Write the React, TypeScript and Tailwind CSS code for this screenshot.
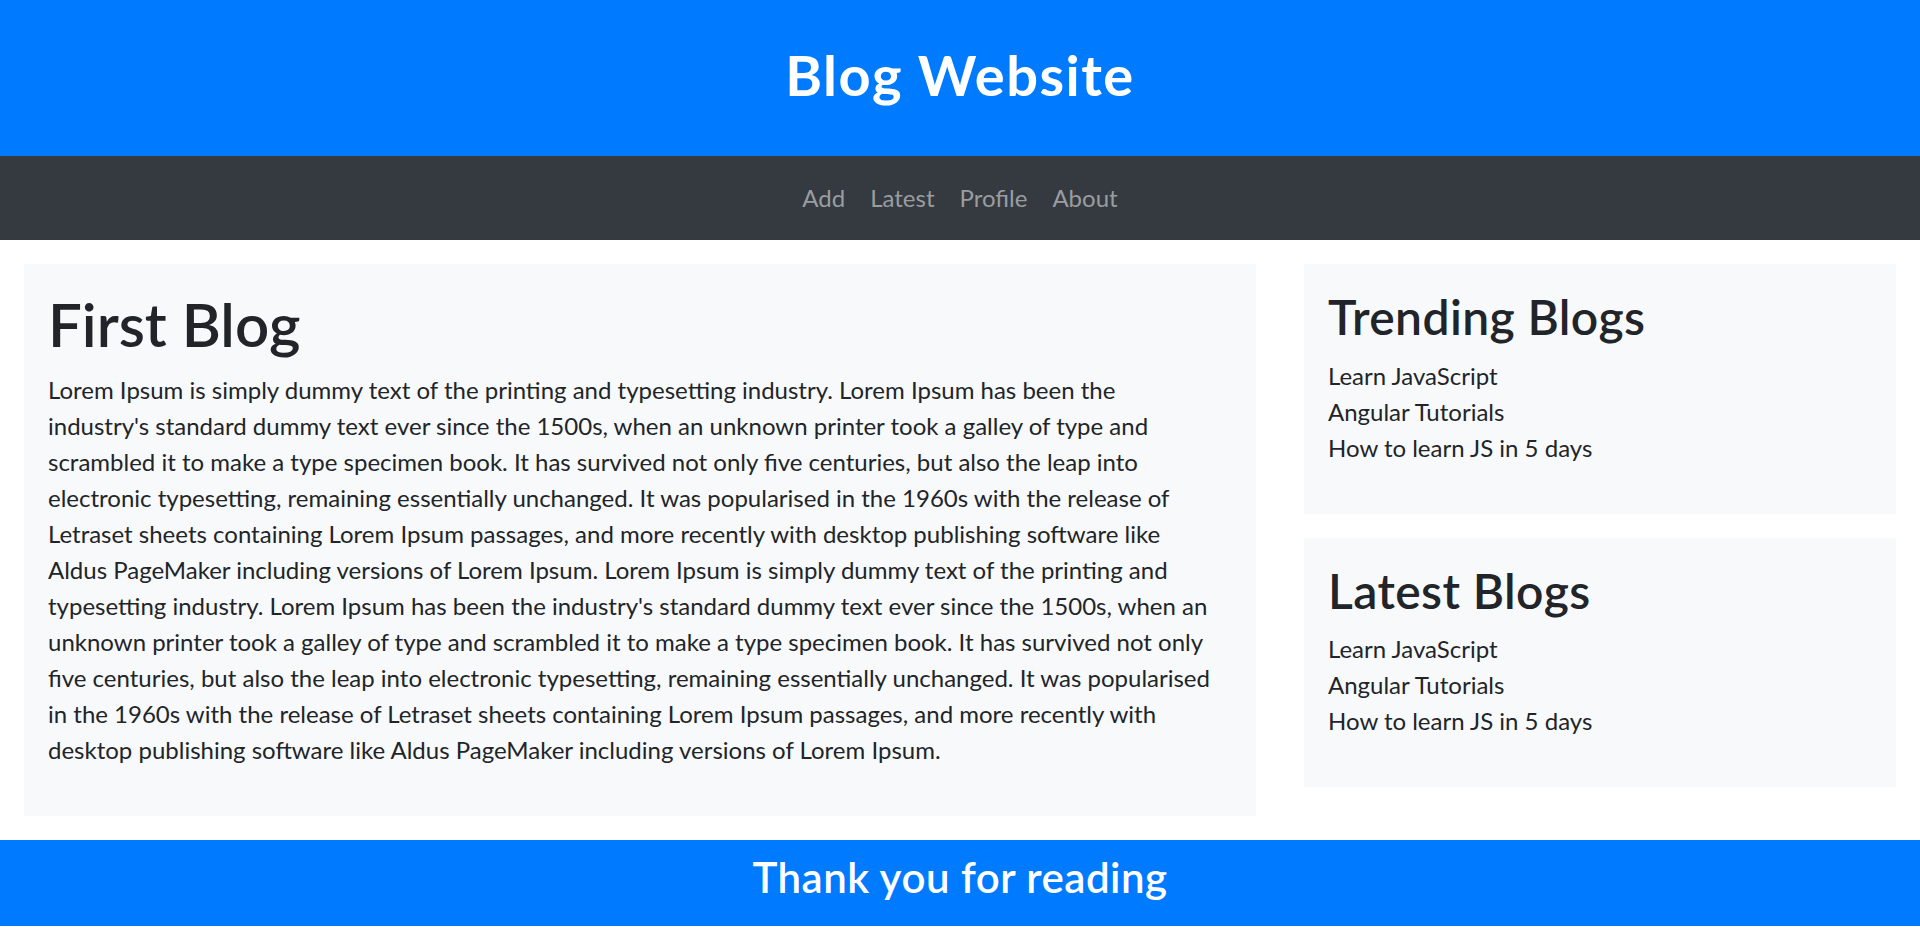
import React from "react";

const lines = [
  "Lorem Ipsum is simply dummy text of the printing and typesetting industry. Lorem Ipsum has been the",
  "industry's standard dummy text ever since the 1500s, when an unknown printer took a galley of type and",
  "scrambled it to make a type specimen book. It has survived not only five centuries, but also the leap into",
  "electronic typesetting, remaining essentially unchanged. It was popularised in the 1960s with the release of",
  "Letraset sheets containing Lorem Ipsum passages, and more recently with desktop publishing software like",
  "Aldus PageMaker including versions of Lorem Ipsum. Lorem Ipsum is simply dummy text of the printing and",
  "typesetting industry. Lorem Ipsum has been the industry's standard dummy text ever since the 1500s, when an",
  "unknown printer took a galley of type and scrambled it to make a type specimen book. It has survived not only",
  "five centuries, but also the leap into electronic typesetting, remaining essentially unchanged. It was popularised",
  "in the 1960s with the release of Letraset sheets containing Lorem Ipsum passages, and more recently with",
  "desktop publishing software like Aldus PageMaker including versions of Lorem Ipsum.",
];

const items = ["Learn JavaScript", "Angular Tutorials", "How to learn JS in 5 days"];

function SideCard({ title }: { title: string }) {
  return (
    <div className="bg-[#f8f9fa] p-[24px]">
      <h2 className="text-[48px] leading-[1.2] font-semibold tracking-[0.4px] mb-[12px] text-[#212529]">{title}</h2>
      <ul className="mb-[24px]">
        {items.map((t) => (
          <li key={t} className="text-[24px] leading-[36px] text-[#212529]">
            {t}
          </li>
        ))}
      </ul>
    </div>
  );
}

export default function App() {
  return (
    <div className="bg-white text-[#212529]" style={{ fontFamily: "Lato, 'Noto Sans', sans-serif" }}>
      <header className="bg-[#007bff] h-[156px] pt-[41px]">
        <h1 className="text-white text-center text-[56px] leading-[1.2] font-bold tracking-[1.5px]">Blog Website</h1>
      </header>
      <nav className="bg-[#343a40] h-[84px] flex items-center justify-center gap-[25px]">
        {["Add", "Latest", "Profile", "About"].map((l) => (
          <a key={l} href="#" className="text-[24px] leading-[36px] text-[#9a9da0]">
            {l}
          </a>
        ))}
      </nav>
      <main className="flex items-start gap-[48px] px-[24px] pt-[24px]">
        <section className="w-[1232px] bg-[#f8f9fa] p-[24px]">
          <h1 className="text-[60px] leading-[1.2] font-semibold mb-[12px]">First Blog</h1>
          <p className="text-[24px] leading-[36px] mb-[24px] whitespace-nowrap">
            {lines.map((l, i) => (
              <React.Fragment key={i}>
                {l}
                {i < lines.length - 1 && <br />}
              </React.Fragment>
            ))}
          </p>
        </section>
        <aside className="w-[592px] flex flex-col gap-[24px]">
          <SideCard title="Trending Blogs" />
          <SideCard title="Latest Blogs" />
        </aside>
      </main>
      <footer className="mt-[24px] bg-[#007bff] py-[12px]">
        <h3 className="text-white text-center text-[42px] leading-[1.2] font-semibold tracking-[0.5px] mb-[12px]">Thank you for reading</h3>
      </footer>
    </div>
  );
}
